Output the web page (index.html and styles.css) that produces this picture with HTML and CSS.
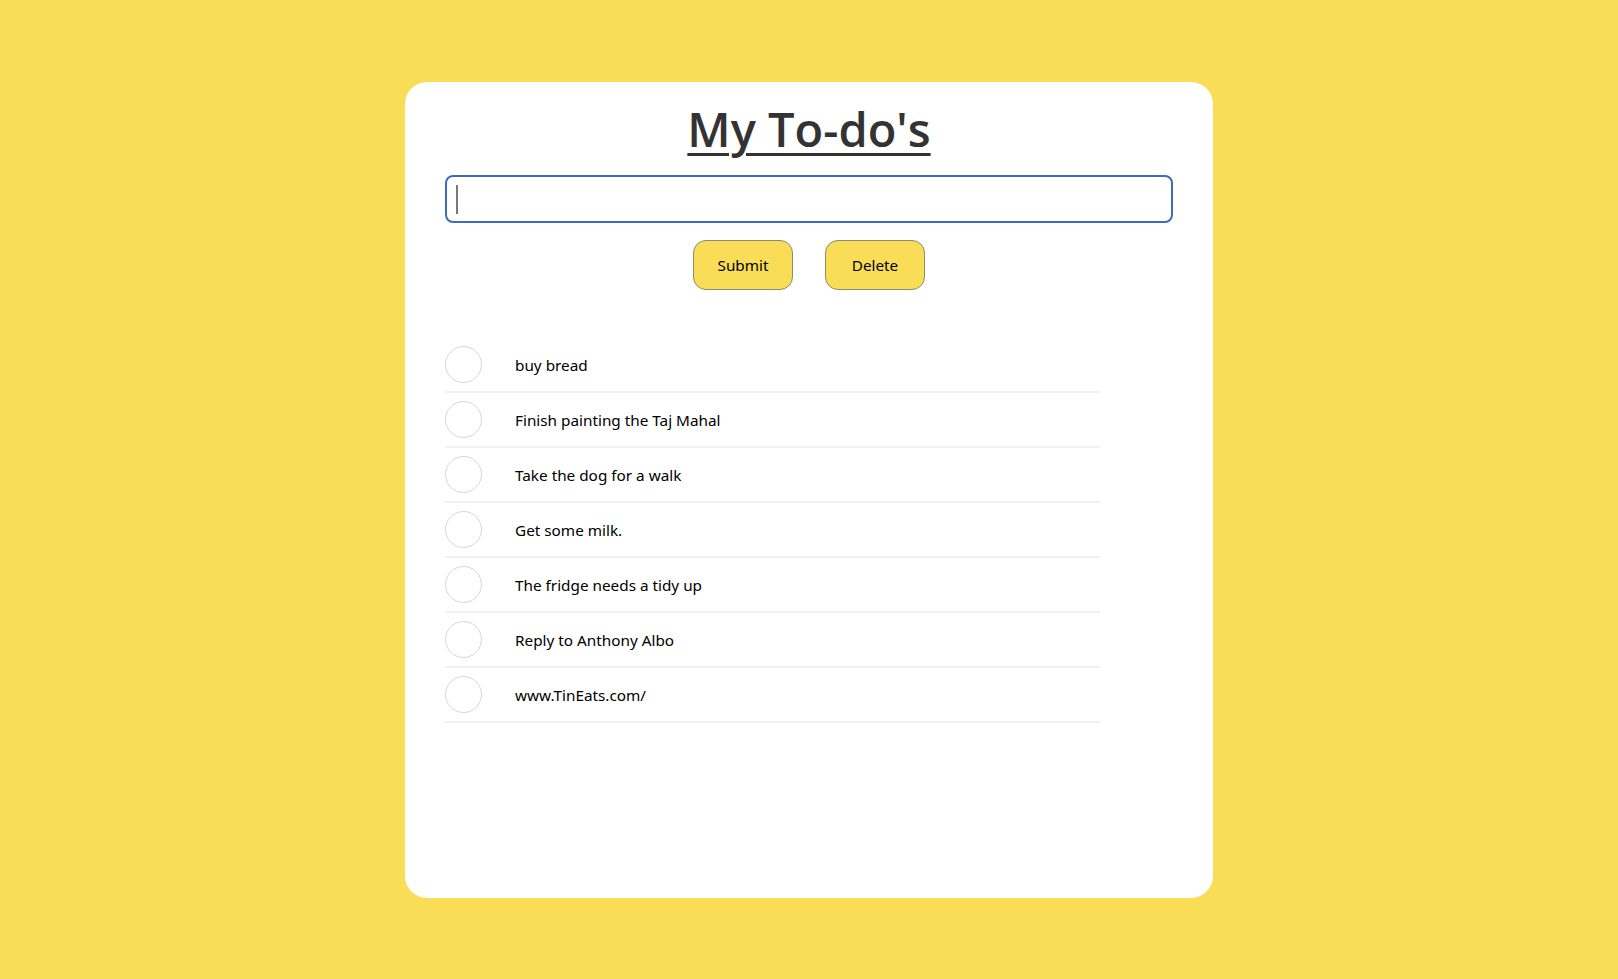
FILE: index.html
```html
<!DOCTYPE html>
<html lang="en">
<head>
<meta charset="utf-8">
<title>My To-do's</title>
<link rel="stylesheet" href="styles.css">
</head>
<body>
<main class="card">
  <h1 class="title">My To-do's</h1>
  <div class="input-wrap">
    <input class="todo-input" type="text" autofocus>
    <span class="caret"></span>
  </div>
  <div class="actions">
    <button class="btn" type="button">Submit</button>
    <button class="btn" type="button">Delete</button>
  </div>
  <ul class="todo-list">
    <li class="todo-item"><span class="check"></span><span class="todo-text">buy bread</span></li>
    <li class="todo-item"><span class="check"></span><span class="todo-text">Finish painting the Taj Mahal</span></li>
    <li class="todo-item"><span class="check"></span><span class="todo-text">Take the dog for a walk</span></li>
    <li class="todo-item"><span class="check"></span><span class="todo-text">Get some milk.</span></li>
    <li class="todo-item"><span class="check"></span><span class="todo-text">The fridge needs a tidy up</span></li>
    <li class="todo-item"><span class="check"></span><span class="todo-text">Reply to Anthony Albo</span></li>
    <li class="todo-item"><span class="check"></span><span class="todo-text">www.TinEats.com/</span></li>
  </ul>
</main>
</body>
</html>
```

FILE: styles.css
```css
* { box-sizing: border-box; }

html, body {
  margin: 0;
  height: 100%;
}

body {
  background: #f9dd57;
  font-family: "Noto Sans", "Open Sans", sans-serif;
  overflow: hidden;
  padding-top: 82px;
}

.card {
  width: 808px;
  height: 816px;
  margin: 0 auto;
  background: #ffffff;
  border-radius: 22px;
  padding: 19px 40px 0;
  display: flex;
  flex-direction: column;
}

.title {
  margin: 0 0 18px;
  text-align: center;
  font-family: "Open Sans", sans-serif;
  font-weight: 600;
  font-size: 47px;
  line-height: 1.2;
  color: #333333;
  text-decoration: underline;
  text-decoration-thickness: 3px;
  text-underline-offset: 6px;
}

.input-wrap {
  position: relative;
}

.todo-input {
  display: block;
  width: 100%;
  height: 48px;
  border: 2px solid #3d6bc2;
  border-radius: 8px;
  outline: none;
  padding: 0 10px;
  font-size: 16px;
  font-family: inherit;
  caret-color: transparent;
}

.caret {
  position: absolute;
  left: 11px;
  top: 10px;
  width: 2px;
  height: 29px;
  background: #777;
}

.actions {
  display: flex;
  justify-content: center;
  gap: 32px;
  margin-top: 17px;
}

.btn {
  width: 100px;
  height: 50px;
  background: #f9dd57;
  border: 1px solid #8f8a6a;
  border-radius: 13px;
  font-family: "Noto Sans", sans-serif;
  font-size: 15.3px;
  color: #000;
  padding: 0;
}

.todo-list {
  list-style: none;
  margin: 48px 0 0;
  padding: 0;
  width: 655px;
}

.todo-item {
  display: flex;
  align-items: center;
  height: 55px;
  border-bottom: 2px solid #f1f1f1;
}

.check {
  width: 37px;
  height: 37px;
  border: 1px solid #d6d6d6;
  border-radius: 50%;
  flex: none;
}

.todo-text {
  margin-left: 33px;
  font-size: 15.3px;
  color: #000;
}
```
